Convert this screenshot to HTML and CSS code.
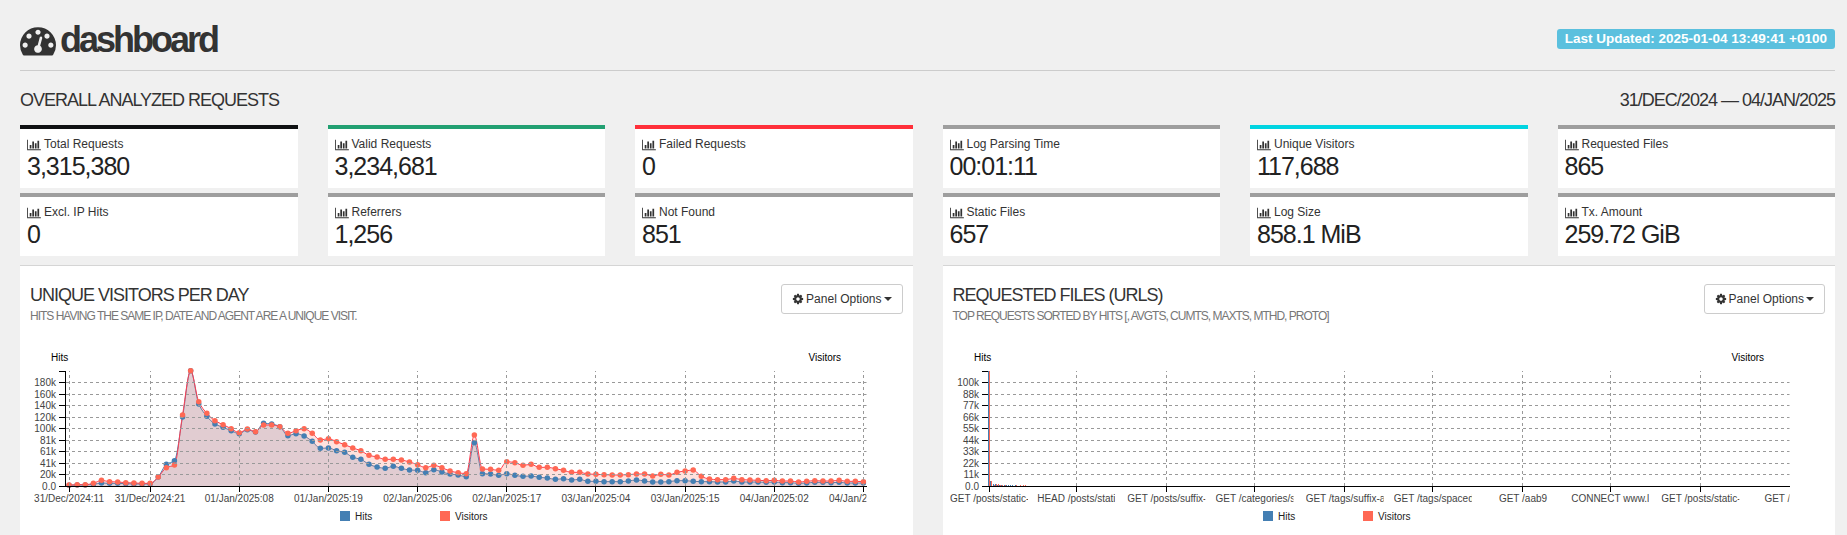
FILE: index.html
```html
<!DOCTYPE html>
<html lang="en">
<head>
<meta charset="utf-8">
<title>Server Statistics</title>
<link rel="stylesheet" href="styles.css">
</head>
<body>
<svg class="sprite" aria-hidden="true">
  <symbol id="i-dashboard" viewBox="0 0 1792 1792"><path d="M384 1152q0-53-37.5-90.5t-90.5-37.5-90.5 37.5-37.5 90.5 37.5 90.5 90.5 37.5 90.5-37.5 37.5-90.5zm192-448q0-53-37.5-90.5t-90.5-37.5-90.5 37.5-37.5 90.5 37.5 90.5 90.5 37.5 90.5-37.5 37.5-90.5zm428 481l101-382q6-26-7.5-48.5t-38.5-29.5-48 6.5-30 39.5l-101 382q-60 5-107 43.5t-63 98.5q-20 77 20 146t117 89 146-20 89-117q16-60-6-117t-72-91zm660-33q0-53-37.5-90.5t-90.5-37.5-90.5 37.5-37.5 90.5 37.5 90.5 90.5 37.5 90.5-37.5 37.5-90.5zm-640-640q0-53-37.5-90.5t-90.5-37.5-90.5 37.5-37.5 90.5 37.5 90.5 90.5 37.5 90.5-37.5 37.5-90.5zm448 192q0-53-37.5-90.5t-90.5-37.5-90.5 37.5-37.5 90.5 37.5 90.5 90.5 37.5 90.5-37.5 37.5-90.5zm320 448q0 261-141 483-19 29-54 29h-1402q-35 0-54-29-141-221-141-483 0-182 71-348t191-286 286-191 348-71 348 71 286 191 191 286 71 348z"/></symbol>
  <symbol id="i-chart" viewBox="0 0 2048 1792"><path d="M640 896v512h-256v-512h256zm384-512v1024h-256v-1024h256zm1024 1152v128h-2048v-1536h128v1408h1920zm-640-896v768h-256v-768h256zm384-384v1152h-256v-1152h256z"/></symbol>
  <symbol id="i-cog" viewBox="0 0 1792 1792"><path d="M1152 896q0-106-75-181t-181-75-181 75-75 181 75 181 181 75 181-75 75-181zm512-109v222q0 12-8 23t-20 13l-185 28q-19 54-39 91 35 50 107 138 10 12 10 25t-9 23q-27 37-99 108t-94 71q-12 0-26-9l-138-108q-44 23-91 38-16 136-29 186-7 28-36 28h-222q-14 0-24.5-8.5t-11.5-21.5l-28-184q-49-16-90-37l-141 107q-10 9-25 9-14 0-25-11-126-114-165-168-7-10-7-23 0-12 8-23 15-21 51-66.5t54-70.5q-27-50-41-99l-183-27q-13-2-21-12.5t-8-23.5v-222q0-12 8-23t19-13l186-28q14-46 39-92-40-57-107-138-10-12-10-24 0-10 9-23 26-36 98.5-107.5t94.5-71.5q13 0 26 10l138 107q44-23 91-38 16-136 29-186 7-28 36-28h222q14 0 24.5 8.5t11.5 21.5l28 184q49 16 90 37l142-107q9-9 24-9 13 0 25 10 129 119 165 170 7 8 7 22 0 12-8 23-15 21-51 66.5t-54 70.5q26 50 41 98l183 28q13 2 21 12.5t8 23.5z"/></symbol>
</svg>

<header class="page-header">
  <h1 class="brand"><svg class="brand-icon" aria-hidden="true"><use href="#i-dashboard"/></svg>dashboard</h1>
  <div class="updated"><span class="badge">Last Updated: 2025-01-04 13:49:41 +0100</span></div>
</header>

<main class="content">
  <div class="summary-head">
    <h2 class="heading">Overall Analyzed Requests</h2>
    <span class="heading">31/Dec/2024 — 04/Jan/2025</span>
  </div>

  <section class="cards">
    <div class="card black"><div class="card-label"><svg class="card-icon"><use href="#i-chart"/></svg>Total Requests</div><div class="card-value">3,315,380</div></div>
    <div class="card green"><div class="card-label"><svg class="card-icon"><use href="#i-chart"/></svg>Valid Requests</div><div class="card-value">3,234,681</div></div>
    <div class="card red"><div class="card-label"><svg class="card-icon"><use href="#i-chart"/></svg>Failed Requests</div><div class="card-value">0</div></div>
    <div class="card"><div class="card-label"><svg class="card-icon"><use href="#i-chart"/></svg>Log Parsing Time</div><div class="card-value">00:01:11</div></div>
    <div class="card cyan"><div class="card-label"><svg class="card-icon"><use href="#i-chart"/></svg>Unique Visitors</div><div class="card-value">117,688</div></div>
    <div class="card"><div class="card-label"><svg class="card-icon"><use href="#i-chart"/></svg>Requested Files</div><div class="card-value">865</div></div>
    <div class="card"><div class="card-label"><svg class="card-icon"><use href="#i-chart"/></svg>Excl. IP Hits</div><div class="card-value">0</div></div>
    <div class="card"><div class="card-label"><svg class="card-icon"><use href="#i-chart"/></svg>Referrers</div><div class="card-value">1,256</div></div>
    <div class="card"><div class="card-label"><svg class="card-icon"><use href="#i-chart"/></svg>Not Found</div><div class="card-value">851</div></div>
    <div class="card"><div class="card-label"><svg class="card-icon"><use href="#i-chart"/></svg>Static Files</div><div class="card-value">657</div></div>
    <div class="card"><div class="card-label"><svg class="card-icon"><use href="#i-chart"/></svg>Log Size</div><div class="card-value">858.1 MiB</div></div>
    <div class="card"><div class="card-label"><svg class="card-icon"><use href="#i-chart"/></svg>Tx. Amount</div><div class="card-value">259.72 GiB</div></div>
  </section>

  <div class="panels">
    <section class="panel">
      <div class="panel-head">
        <div class="panel-titles">
          <h3 class="heading">Unique visitors per day</h3>
          <p class="panel-sub">Hits having the same IP, date and agent are a unique visit.</p>
        </div>
        <button class="options" type="button"><svg class="options-icon" aria-hidden="true"><use href="#i-cog"/></svg>Panel Options<span class="caret"></span></button>
      </div>
      <svg class="chart" id="chart-visitors" role="img" aria-label="Hits and visitors per hour"></svg>
    </section>
    <section class="panel">
      <div class="panel-head">
        <div class="panel-titles">
          <h3 class="heading">Requested Files (URLs)</h3>
          <p class="panel-sub">Top requests sorted by hits [, avgts, cumts, maxts, mthd, proto]</p>
        </div>
        <button class="options" type="button"><svg class="options-icon" aria-hidden="true"><use href="#i-cog"/></svg>Panel Options<span class="caret"></span></button>
      </div>
      <svg class="chart" id="chart-requests" role="img" aria-label="Hits and visitors per requested file"></svg>
    </section>
  </div>
</main>
<script src="charts.js"></script>
</body>
</html>
```

FILE: styles.css
```css
* {
  box-sizing: border-box;
}

body {
  margin: 0;
  min-height: 100vh;
  padding: 0 12px 0 20px;
  display: flex;
  flex-direction: column;
  background: #f0f0f0;
  color: #333;
  font-family: "Liberation Sans", Arial, sans-serif;
  font-size: 12px;
  line-height: 17px;
}

svg {
  fill: currentColor;
}

.sprite {
  display: none;
}

.page-header {
  display: flex;
  justify-content: space-between;
  align-items: center;
  height: 71px;
  padding-top: 8px;
  border-bottom: 1px solid #ccc;
}

.brand {
  display: flex;
  align-items: center;
  gap: 4px;
  margin: 2px 0 0;
  font-size: 36px;
  line-height: 40px;
  letter-spacing: -3px;
}

.brand-icon {
  width: 36px;
  height: 36px;
}

.updated {
  font-size: 18px;
  line-height: 20px;
}

.badge {
  display: block;
  padding: 0 8px;
  border-radius: 3px;
  background: #5bc0de;
  color: #fff;
  font-size: 75%;
  font-weight: bold;
}

.content {
  flex: 1;
  display: flex;
  flex-direction: column;
}

.summary-head {
  display: flex;
  justify-content: space-between;
  padding: 19px 0 15px;
}

.heading {
  margin: 0;
  font-size: 18px;
  font-weight: normal;
  line-height: 20px;
  letter-spacing: -1px;
  text-transform: uppercase;
}

.cards {
  display: grid;
  grid-template-columns: repeat(6, 1fr);
  gap: 5px 30px;
}

.card {
  padding: 7px 7px 8px;
  border-top: 4px solid #9e9e9e;
  background: #fff;
}

.card.black { border-color: #0f1113; }
.card.green { border-color: #22a072; }
.card.red { border-color: #ff303a; }
.card.cyan { border-color: #00d4e1; }

.card-label {
  display: flex;
  align-items: center;
  gap: 3px;
}

.card-icon {
  width: 14px;
  height: 12px;
}

.card-value {
  color: #222;
  font-size: 25px;
  line-height: 27px;
  letter-spacing: -1px;
}

.panels {
  flex: 1;
  display: grid;
  grid-template-columns: repeat(2, minmax(0, 1fr));
  gap: 30px;
  padding-top: 9px;
}

.panel {
  padding: 18px 10px 0;
  border-top: 1px solid #d5d5d5;
  background: #fff;
}

.panel-head {
  display: flex;
  justify-content: space-between;
  align-items: flex-start;
  height: 60px;
}

.panel-titles {
  padding-top: 1px;
}

.panel-sub {
  margin: 3px 0 0;
  color: #777;
  font-size: 12px;
  letter-spacing: -1px;
  text-transform: uppercase;
}

.options {
  display: flex;
  align-items: center;
  gap: 2px;
  height: 30px;
  padding: 0 10px;
  border: 1px solid #ccc;
  border-radius: 3px;
  background: #fff;
  color: #333;
  font: inherit;
}

.options-icon {
  width: 12px;
  height: 12px;
}

.caret {
  border: 4px solid transparent;
  border-top-color: currentColor;
  border-bottom: 0;
}

.chart {
  display: block;
  width: 100%;
  height: 184px;
  overflow: visible;
  font-size: 10px;
}

.axis-line {
  fill: none;
  stroke: #000;
  shape-rendering: crispEdges;
}

.grid-line {
  stroke: #999;
  stroke-dasharray: 3 3;
  shape-rendering: crispEdges;
}

.tick-label {
  fill: #444;
}

.chart-title {
  fill: #000;
}

.legend-label {
  fill: #222;
}

.bar {
  shape-rendering: crispEdges;
}

.hits { fill: #447fb3; }
.visitors { fill: #ff6854; }
.hits-line { fill: none; stroke: #447fb3; }
.visitors-line { fill: none; stroke: #ff3b4e; }
.hits-area { fill: #447fb3; fill-opacity: 0.2; }
.visitors-area { fill: #ff6854; fill-opacity: 0.2; }
```

FILE: charts.js
```js
const NS = 'http://www.w3.org/2000/svg';
const TOP = 27;
const BASE = 142;
const LEFT = 35;
const RIGHT = 36;

// Plot heights in thirds of a unit, one entry per hour.
const visitors = [3,4,4,8,17,13,12,10,9,8,8,27,55,63,213,346,253,218,196,184,172,160,171,163,183,183,178,158,166,172,158,138,142,133,124,114,106,92,87,80,80,78,72,64,55,62,55,45,40,37,153,51,50,47,73,70,62,65,56,56,52,47,41,41,36,35,34,33,33,34,36,36,30,35,33,41,45,48,29,21,19,19,23,19,18,17,16,17,15,15,12,14,16,15,15,17,14,14,13];
const hits = [2,3,3,5,9,8,8,7,6,6,6,27,65,76,207,346,246,209,186,176,166,157,169,162,188,186,178,151,157,150,134,113,114,106,101,86,80,65,57,53,59,53,48,47,40,49,42,36,33,28,130,37,36,32,37,32,29,30,26,24,20,22,18,20,14,14,13,13,13,15,18,15,12,12,13,16,16,14,13,13,12,12,15,12,12,12,11,12,10,10,8,9,11,11,10,11,9,9,9];
const hours = [[0,'31/Dec/2024:11'],[10,'31/Dec/2024:21'],[21,'01/Jan/2025:08'],[32,'01/Jan/2025:19'],[43,'02/Jan/2025:06'],[54,'02/Jan/2025:17'],[65,'03/Jan/2025:04'],[76,'03/Jan/2025:15'],[87,'04/Jan/2025:02'],[98,'04/Jan/2025:13']];

// Tick position as a share of the plot width, out of 800.
const files = [[0,'GET /posts/static-'],[87,'HEAD /posts/stati'],[177,'GET /posts/suffix-'],[265,'GET /categories/s'],[355,'GET /tags/suffix-a'],[443,'GET /tags/spaced'],[533,'GET /aab9'],[620,'CONNECT www.l'],[710,'GET /posts/static-'],[798,'GET /aab2']];
const bars = [[2,5,5],[5,2,1],[7,2,2],[9,1,2],[11,1,1],[13,1,1],[16,1,1],[18,1,0],[20,1,0],[22,1,0],[24,1,0],[27,1,1],[31,0,1],[34,0,1],[36,0,1]];

function add(parent, name, attrs, text) {
  const el = document.createElementNS(NS, name);
  for (const key in attrs) el.setAttribute(key, attrs[key]);
  if (text !== undefined) el.textContent = text;
  parent.appendChild(el);
  return el;
}

// Monotone cubic path through the points.
function curve(pts) {
  const n = pts.length;
  const slope = [];
  for (let i = 0; i < n - 1; i++) slope.push((pts[i + 1][1] - pts[i][1]) / (pts[i + 1][0] - pts[i][0]));
  const m = pts.map((p, i) => {
    if (i === 0) return slope[0];
    if (i === n - 1) return slope[n - 2];
    const a = slope[i - 1], b = slope[i];
    return a * b <= 0 ? 0 : 2 * a * b / (a + b);
  });
  let d = 'M' + pts[0];
  for (let i = 1; i < n; i++) {
    const h = (pts[i][0] - pts[i - 1][0]) / 3;
    d += 'C' + [pts[i - 1][0] + h, pts[i - 1][1] + m[i - 1] * h, pts[i][0] - h, pts[i][1] - m[i] * h, pts[i][0], pts[i][1]];
  }
  return d;
}

function rowY(i) {
  return Math.floor(BASE - i * 11.5) + 0.5;
}

function frame(svg, width, yLabels) {
  const right = width - RIGHT;
  svg.replaceChildren();
  const clip = add(svg, 'clipPath', { id: svg.id + '-clip' });
  add(clip, 'rect', { x: -10, y: 0, width: right + 10, height: 184 });
  add(svg, 'text', { class: 'chart-title', x: LEFT - 14, y: 17 }, 'Hits');
  add(svg, 'text', { class: 'chart-title', x: right - 58, y: 17 }, 'Visitors');
  const mid = Math.round((LEFT + right) / 2 - 126);
  [['hits', 'Hits', 0], ['visitors', 'Visitors', 100]].forEach(([cls, label, dx]) => {
    add(svg, 'rect', { class: cls, x: mid + dx, y: 167, width: 10, height: 10 });
    add(svg, 'text', { class: 'legend-label', x: mid + dx + 15, y: 176 }, label);
  });
  yLabels.forEach((label, i) => {
    const y = rowY(i);
    add(svg, 'text', { class: 'tick-label', x: LEFT - 9, y: y + 3, 'text-anchor': 'end' }, label);
    add(svg, 'path', { class: 'axis-line', d: `M${LEFT - 6} ${y}H${LEFT}` });
  });
  const plot = add(svg, 'g', { 'clip-path': `url(#${svg.id}-clip)` });
  return { right, plot };
}

function finish(svg, plot, right, ticks) {
  for (let i = 1; i < 10; i++) {
    add(plot, 'path', { class: 'grid-line', d: `M${LEFT + 1} ${rowY(i)}H${right}` });
  }
  ticks.forEach(([x, label], i) => {
    const px = Math.floor(x) + 0.5;
    if (px < right - 2) {
      add(plot, 'path', { class: 'grid-line', d: `M${px} ${BASE}V${TOP}` });
      add(plot, 'path', { class: 'axis-line', d: `M${px} ${BASE}V${BASE + 6}` });
    }
    const id = `${svg.id}-t${i}`;
    const cp = add(svg, 'clipPath', { id });
    add(cp, 'rect', { x: x - 39, y: 145, width: 78, height: 20 });
    const g = add(plot, 'g', { 'clip-path': `url(#${id})` });
    const t = add(g, 'text', { class: 'tick-label', x, y: BASE + 16 }, label);
    t.setAttribute('x', x - Math.min(t.getComputedTextLength() / 2, 39));
  });
  add(svg, 'path', { class: 'axis-line', d: `M${LEFT - 6} ${TOP + 0.5}H${LEFT + 0.5}V${BASE + 0.5}` });
  add(svg, 'path', { class: 'axis-line', d: `M${LEFT - 6} ${BASE + 0.5}H${right}` });
}

function drawVisitors() {
  const svg = document.getElementById('chart-visitors');
  const width = svg.getBoundingClientRect().width;
  const { right, plot } = frame(svg, width, ['0.0','20k','41k','61k','81k','100k','120k','140k','160k','180k']);
  const step = (right + 1 - LEFT) / visitors.length;
  const xAt = i => LEFT + step * (i + 0.5);
  const series = [['hits', hits], ['visitors', visitors]].map(([cls, data]) => [cls, data.map((v, i) => [xAt(i), BASE - v / 3])]);
  series.forEach(([cls, pts]) => {
    const d = curve(pts);
    add(plot, 'path', { class: cls + '-area', d: `${d}V${BASE}H${pts[0][0]}Z` });
    add(plot, 'path', { class: cls + '-line', d });
  });
  series.forEach(([cls, pts]) => pts.forEach(p => add(plot, 'circle', { class: cls, cx: p[0], cy: p[1], r: 2.75 })));
  finish(svg, plot, right, hours.map(([i, label]) => [xAt(i), label]));
}

function drawRequests() {
  const svg = document.getElementById('chart-requests');
  const width = svg.getBoundingClientRect().width;
  const { right, plot } = frame(svg, width, ['0.0','11k','22k','33k','44k','55k','66k','77k','88k','100k']);
  const unit = (right - LEFT) / 800;
  finish(svg, plot, right, files.map(([x, label]) => [LEFT + 1 + x * unit, label]));
  bars.forEach(([x, h, v]) => {
    add(svg, 'rect', { class: 'bar hits', x: LEFT + x * unit, y: BASE - h, width: 1, height: h });
    add(svg, 'rect', { class: 'bar visitors', x: LEFT + 1 + x * unit, y: BASE - v, width: 1, height: v });
  });
  add(svg, 'rect', { class: 'bar hits', x: LEFT, y: TOP, width: 1, height: BASE - TOP });
  add(svg, 'rect', { class: 'bar visitors', x: LEFT + 1, y: TOP, width: 1, height: BASE - TOP });
}

function draw() {
  drawVisitors();
  drawRequests();
}

draw();
window.addEventListener('resize', draw);
```
